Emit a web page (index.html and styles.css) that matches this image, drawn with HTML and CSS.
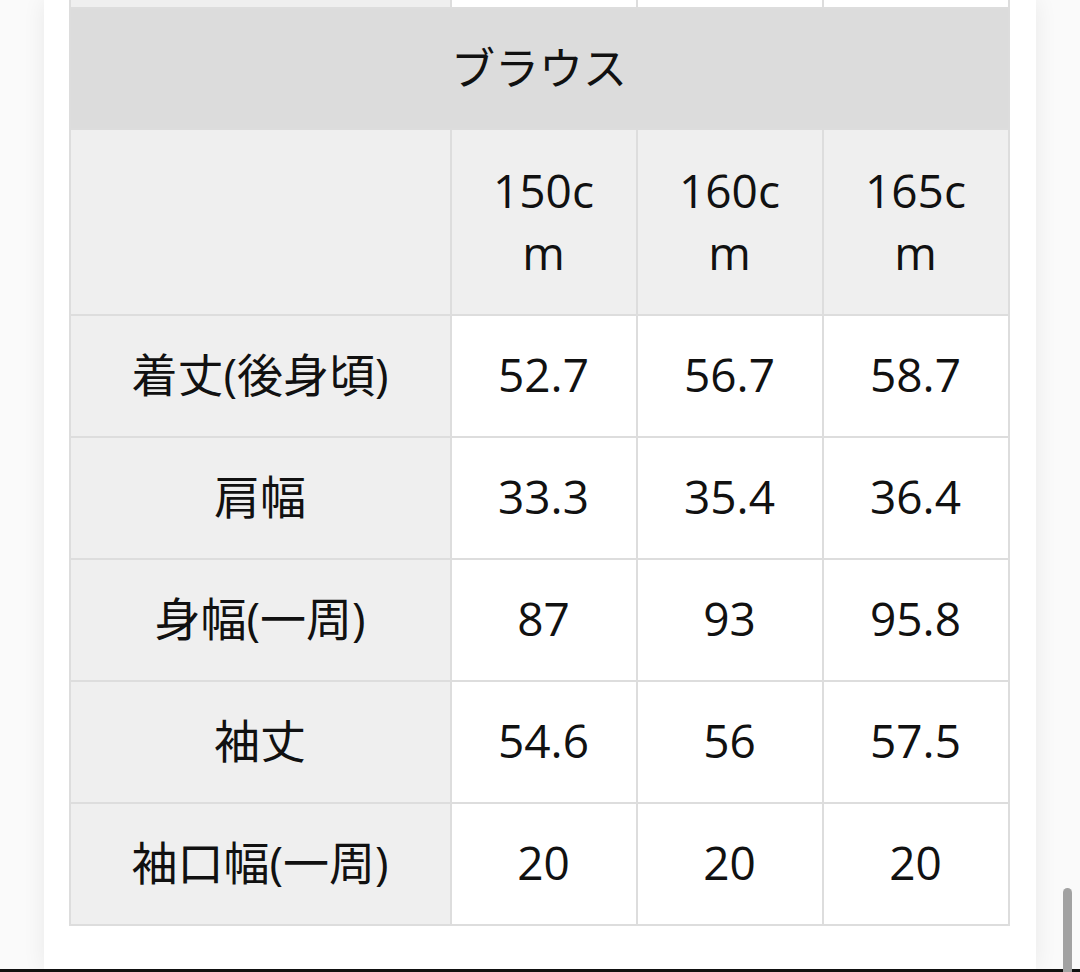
FILE: index.html
```html
<!DOCTYPE html>
<html lang="ja">
<head>
<meta charset="utf-8">
<title>サイズ表</title>
<link rel="stylesheet" href="styles.css">
</head>
<body>
<div class="page">
  <main class="card">
    <table class="size-table">
      <tbody>
        <tr class="prev-row">
          <td class="label"></td><td></td><td></td><td></td>
        </tr>
        <tr class="title-row">
          <th colspan="4">ブラウス</th>
        </tr>
        <tr class="head-row">
          <th class="label"></th>
          <th>150cm</th>
          <th>160cm</th>
          <th>165cm</th>
        </tr>
        <tr>
          <th class="label">着丈(後身頃)</th>
          <td>52.7</td><td>56.7</td><td>58.7</td>
        </tr>
        <tr>
          <th class="label">肩幅</th>
          <td>33.3</td><td>35.4</td><td>36.4</td>
        </tr>
        <tr>
          <th class="label">身幅(一周)</th>
          <td>87</td><td>93</td><td>95.8</td>
        </tr>
        <tr>
          <th class="label">袖丈</th>
          <td>54.6</td><td>56</td><td>57.5</td>
        </tr>
        <tr>
          <th class="label">袖口幅(一周)</th>
          <td>20</td><td>20</td><td>20</td>
        </tr>
      </tbody>
    </table>
  </main>
</div>
<div class="bottom-bar"></div>
<div class="scrollbar"></div>
</body>
</html>
```
FILE: styles.css
```css
html, body {
  margin: 0;
  padding: 0;
  height: 100%;
  background: #ffffff;
  overflow: hidden;
}

body {
  font-family: "Open Sans", "Noto Sans CJK JP", sans-serif;
  color: #111111;
  display: flex;
  flex-direction: column;
}

.page {
  flex: 1;
  display: flex;
  justify-content: center;
  background: #fafafa;
  overflow: hidden;
}

.card {
  width: 992px;
  margin-left: -1px;
  background: #ffffff;
  box-shadow: 0 0 22px rgba(0, 0, 0, 0.07);
  padding: 0 26px 0 25px;
  box-sizing: border-box;
  overflow: hidden;
}

.size-table {
  width: 941px;
  margin-top: -115px;
  border-collapse: collapse;
  table-layout: fixed;
  border: 2px solid #dddddd;
}

.size-table th,
.size-table td {
  border: 2px solid #dddddd;
  font-weight: 400;
  font-size: 46px;
  line-height: 62px;
  text-align: center;
  vertical-align: middle;
  padding: 27px 30px 31px;
  word-break: break-all;
  background: #ffffff;
}

.size-table .label {
  width: 381px;
  box-sizing: border-box;
  background: #efefef;
  padding: 27px 10px 31px;
}

.prev-row td {
  height: 62px;
}

.title-row th {
  background: #dcdcdc;
  font-size: 44px;
  padding-top: 28px;
  padding-bottom: 29px;
}

.head-row th {
  background: #efefef;
  padding-top: 29px;
  padding-bottom: 31px;
}

.bottom-bar {
  height: 3px;
  background: #111111;
  flex: none;
}

.scrollbar {
  position: fixed;
  right: 8px;
  bottom: 0;
  width: 9px;
  height: 84px;
  border-radius: 5px 5px 0 0;
  background: #a2a2a2;
}
```
